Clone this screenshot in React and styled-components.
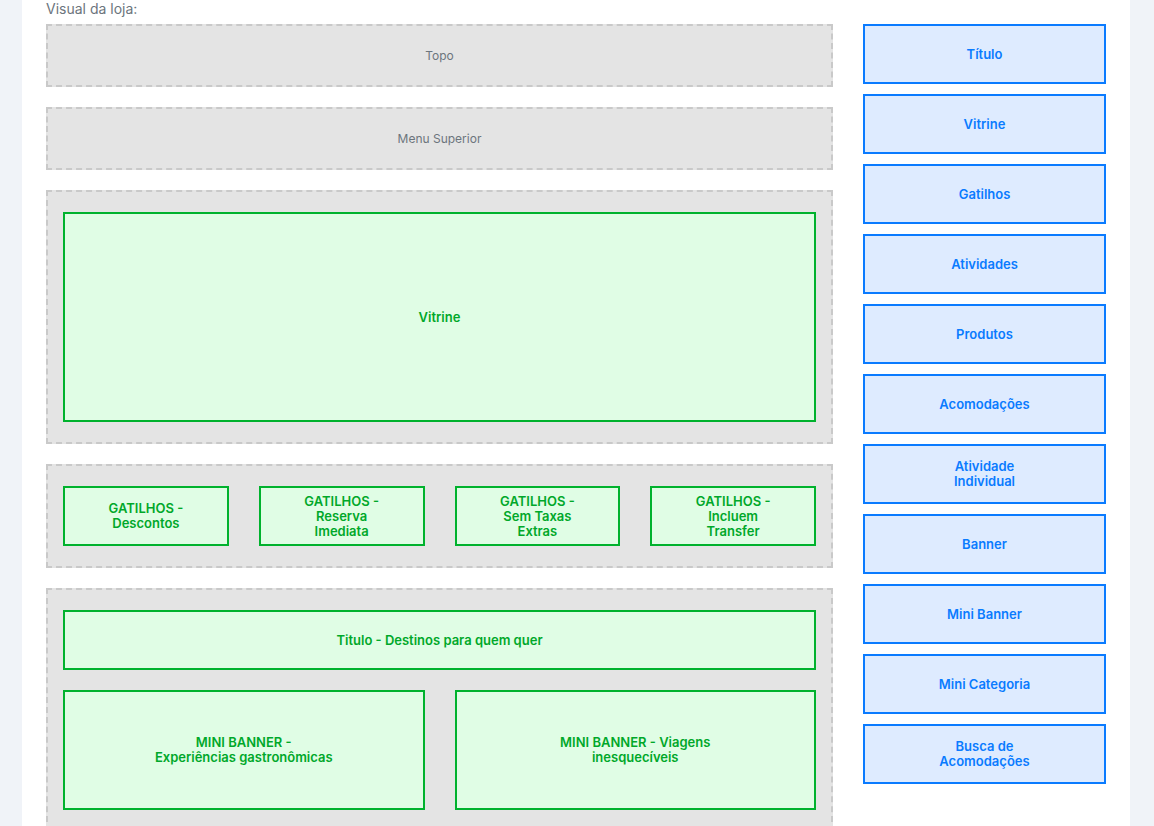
import React from 'react';
import styled, { createGlobalStyle } from 'styled-components';

const GlobalStyle = createGlobalStyle`
    body {
        margin: 0;
        background: #f0f3f8;
        font-family: Inter, "Noto Sans", "Liberation Sans", sans-serif;
    }
`

const Panel = styled.div`
    width: 1108px;
    margin-left: 22px;
    min-height: 826px;
    background: #ffffff;
    padding: 0 24px;
    box-sizing: border-box;
`

const Label = styled.div`
    font-size: 14px;
    line-height: 18px;
    color: #6c757d;
    margin-bottom: 6px;
`

const Layout = styled.div`
    display: grid;
    grid-template-columns: 787px 243px;
    gap: 30px;
    align-items: start;
`

const Preview = styled.div`
    display: flex;
    flex-direction: column;
    gap: 20px;
`

const Section = styled.div`
    border: 2px dashed #c9c9c9;
    background: #e4e4e4;
    padding: 20px 15px;
    display: flex;
    flex-direction: column;
    gap: 20px;
`

const Placeholder = styled.div`
    height: 19px;
    display: flex;
    align-items: center;
    justify-content: center;
    font-size: 12px;
    color: #6c757d;
`

const Row = styled.div`
    display: grid;
    grid-template-columns: repeat(${props => props.cols}, 1fr);
    gap: 30px;
`

const Block = styled.div`
    box-sizing: border-box;
    height: ${props => props.h}px;
    border: 2px solid #00b22d;
    background: #e0fde5;
    color: #00a82a;
    font-size: 13px;
    font-weight: 600;
    line-height: 15px;
    text-align: center;
    display: flex;
    align-items: center;
    justify-content: center;
`

const Sidebar = styled.div`
    display: flex;
    flex-direction: column;
    gap: 10px;
`

const SideButton = styled.div`
    box-sizing: border-box;
    height: 60px;
    border: 2px solid #0a7bff;
    background: #deebff;
    color: #0a7bff;
    font-size: 13px;
    font-weight: 600;
    line-height: 15px;
    text-align: center;
    display: flex;
    align-items: center;
    justify-content: center;
`

const gatilhos = [
    ['GATILHOS -', 'Descontos'],
    ['GATILHOS -', 'Reserva', 'Imediata'],
    ['GATILHOS -', 'Sem Taxas', 'Extras'],
    ['GATILHOS -', 'Incluem', 'Transfer'],
]

const sideItems = [
    ['Título'],
    ['Vitrine'],
    ['Gatilhos'],
    ['Atividades'],
    ['Produtos'],
    ['Acomodações'],
    ['Atividade', 'Individual'],
    ['Banner'],
    ['Mini Banner'],
    ['Mini Categoria'],
    ['Busca de', 'Acomodações'],
]

const Lines = ({ lines }) => (
    <span>
        {lines.map((l, i) => (
            <React.Fragment key={i}>
                {i > 0 && <br />}
                {l}
            </React.Fragment>
        ))}
    </span>
)

const App = () => {
    return (
        <>
            <GlobalStyle />
            <Panel>
                <Label>Visual da loja:</Label>
                <Layout>
                    <Preview>
                        <Section><Placeholder>Topo</Placeholder></Section>
                        <Section><Placeholder>Menu Superior</Placeholder></Section>
                        <Section>
                            <Block h={210}>Vitrine</Block>
                        </Section>
                        <Section>
                            <Row cols={4}>
                                {gatilhos.map((g, i) => (
                                    <Block key={i} h={60}><Lines lines={g} /></Block>
                                ))}
                            </Row>
                        </Section>
                        <Section>
                            <Block h={60}>Titulo - Destinos para quem quer</Block>
                            <Row cols={2}>
                                <Block h={120}><Lines lines={['MINI BANNER -', 'Experiências gastronômicas']} /></Block>
                                <Block h={120}><Lines lines={['MINI BANNER - Viagens', 'inesquecíveis']} /></Block>
                            </Row>
                        </Section>
                    </Preview>
                    <Sidebar>
                        {sideItems.map((s, i) => (
                            <SideButton key={i}><Lines lines={s} /></SideButton>
                        ))}
                    </Sidebar>
                </Layout>
            </Panel>
        </>
    );
};

export default App;
